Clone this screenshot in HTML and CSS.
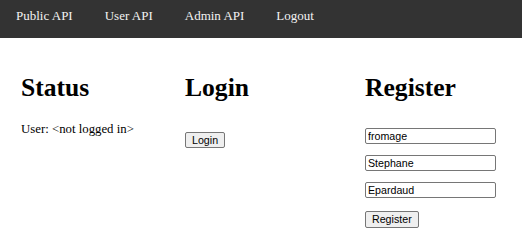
FILE: index.html
```html
<!DOCTYPE html>
<html>
<head>
<meta charset="utf-8">
<title>API Demo</title>
<link rel="stylesheet" href="styles.css">
</head>
<body>
<nav class="topnav">
  <a href="#" class="nav-link">Public API</a>
  <a href="#" class="nav-link">User API</a>
  <a href="#" class="nav-link">Admin API</a>
  <a href="#" class="nav-link">Logout</a>
</nav>
<main class="panels">
  <section class="panel">
    <h1 class="panel-title">Status</h1>
    <p class="status-text">User: &lt;not logged in&gt;</p>
  </section>
  <section class="panel">
    <h1 class="panel-title">Login</h1>
    <div class="login-form">
      <button class="btn" type="button">Login</button>
    </div>
  </section>
  <section class="panel">
    <h1 class="panel-title">Register</h1>
    <form class="register-form">
      <input class="field" type="text" value="fromage">
      <input class="field" type="text" value="Stephane">
      <input class="field" type="text" value="Epardaud">
      <div><button class="btn btn-register" type="button">Register</button></div>
    </form>
  </section>
</main>
</body>
</html>
```
FILE: styles.css
```css
html, body {
  margin: 0;
  padding: 0;
  background: #ffffff;
  font-family: "Liberation Serif", "Times New Roman", serif;
  color: #000000;
}

.topnav {
  display: flex;
  height: 38px;
  background: #333333;
}

.nav-link {
  display: block;
  padding: 8px 16px 0 16px;
  font-size: 13px;
  line-height: 15px;
  color: #f2f2f2;
  text-decoration: none;
}

.panels {
  display: grid;
  grid-template-columns: 164px 180px 1fr;
  padding: 35px 0 0 21px;
}

.panel-title {
  margin: 0;
  font-size: 25.6px;
  line-height: 29px;
  font-weight: bold;
}

.status-text {
  margin: 20px 0 0 0;
  font-size: 12.8px;
  line-height: 15px;
}

.login-form {
  margin-top: 28px;
}

.register-form {
  display: flex;
  flex-direction: column;
  align-items: flex-start;
  gap: 11px;
  margin: 26px 0 0 0;
}

.field {
  box-sizing: border-box;
  width: 131px;
  height: 16px;
  margin: 0;
  padding: 0 2px;
  border: 1px solid #767676;
  border-radius: 2px;
  font-family: "Liberation Sans", Arial, sans-serif;
  font-size: 10.67px;
  color: #000000;
  background: #ffffff;
}

.btn {
  box-sizing: border-box;
  height: 16px;
  margin: 0;
  padding: 0 6px;
  border: 1px solid #767676;
  border-radius: 2px;
  background: #efefef;
  font-family: "Liberation Sans", Arial, sans-serif;
  font-size: 10.67px;
  line-height: 14px;
  color: #000000;
}

.btn-register {
  height: 17px;
}
```
